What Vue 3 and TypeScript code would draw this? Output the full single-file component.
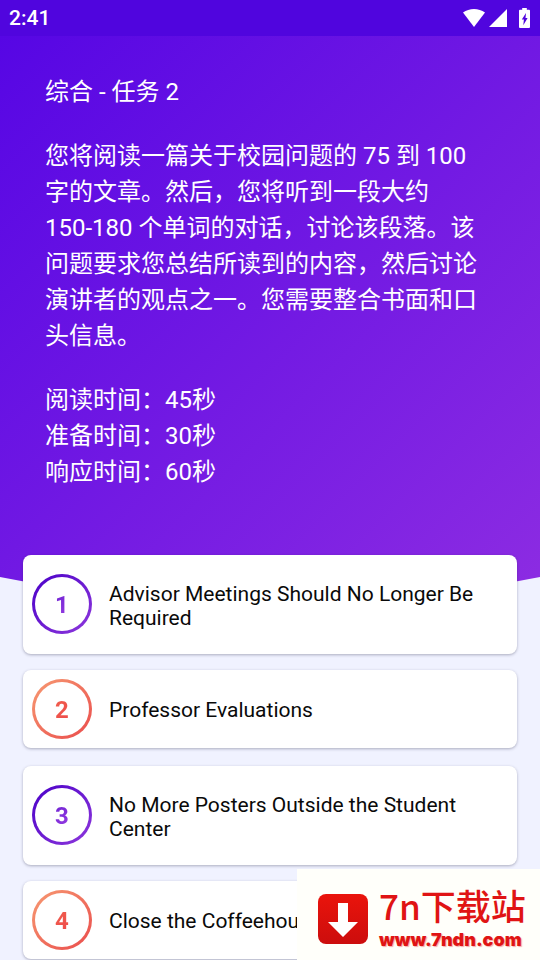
<script setup lang="ts">
interface Topic {
  id: number
  title: string
}

const intro: string =
  '您将阅读一篇关于校园问题的 75 到 100 字的文章。然后，您将听到一段大约 150-180 个单词的对话，讨论该段落。该问题要求您总结所读到的内容，然后讨论演讲者的观点之一。您需要整合书面和口头信息。'

const timings: string[] = ['阅读时间：45秒', '准备时间：30秒', '响应时间：60秒']

const topics: Topic[] = [
  { id: 1, title: 'Advisor Meetings Should No Longer Be Required' },
  { id: 2, title: 'Professor Evaluations' },
  { id: 3, title: 'No More Posters Outside the Student Center' },
  { id: 4, title: 'Close the Coffeehouse' },
]
</script>

<template>
  <div class="page">
    <div class="status">
      <span class="clock">2:41</span>
      <div class="indicators">
        <svg class="wifi" viewBox="0 0 22 18" aria-hidden="true">
          <path d="M0 3.6C3.2 1.2 7 0 11 0s7.800 1.200 11 3.600L11 18z" fill="#fff" />
        </svg>
        <svg class="signal" viewBox="0 0 18 18" aria-hidden="true">
          <path d="M18 0v18H0z" fill="#fff" />
        </svg>
        <svg class="battery" viewBox="0 0 11 20" aria-hidden="true">
          <path
            d="M3.200 0h4.600v1.800H10q1 0 1 1V19q0 1-1 1H1q-1 0-1-1V2.800q0-1 1-1h2.200zM7 5L2.800 11.600h2.100L4.300 17.200 8.600 10H6.500z"
            fill="#fff"
            fill-rule="evenodd"
          />
        </svg>
      </div>
    </div>

    <header class="hero">
      <h1>综合 - 任务 2</h1>
      <p>{{ intro }}</p>
      <ul class="timings">
        <li v-for="line in timings" :key="line">{{ line }}</li>
      </ul>
    </header>

    <main class="topics">
      <button
        v-for="topic in topics"
        :key="topic.id"
        type="button"
        class="card"
        :class="topic.id % 2 ? 'violet' : 'coral'"
      >
        <span class="ring"><span class="number">{{ topic.id }}</span></span>
        <span class="title">{{ topic.title }}</span>
      </button>
    </main>

    <aside class="stamp">
      <svg class="stamp-icon" viewBox="0 0 52 52" aria-hidden="true">
        <defs>
          <linearGradient id="stampFill" x1="0" y1="0" x2="0" y2="1">
            <stop offset="0" stop-color="#ea140c" />
            <stop offset="1" stop-color="#cc0d0d" />
          </linearGradient>
        </defs>
        <rect x="1" y="1" width="50" height="50" rx="8" fill="url(#stampFill)" />
        <path d="M21 10h10v19h10L26 44 11 29h10z" fill="#fff" />
      </svg>
      <div class="stamp-text">
        <span class="stamp-name">7n下载站</span>
        <span class="stamp-url">www.7ndn.com</span>
      </div>
    </aside>
  </div>
</template>

<style>
body {
  margin: 0;
  background: #f0f2ff;
}
</style>

<style scoped>
.page {
  position: relative;
  min-height: 100vh;
  overflow: hidden;
  font-family: Roboto, 'Noto Sans CJK SC', sans-serif;
  background: #f0f2ff;
}

.status {
  display: flex;
  align-items: center;
  justify-content: space-between;
  height: 36px;
  padding: 0 10px 0 9px;
  background: #5005de;
  color: #fff;
}

.clock {
  font-size: 21px;
  font-weight: 500;
  line-height: 36px;
}

.indicators {
  display: flex;
  align-items: center;
}

.wifi {
  width: 22px;
  height: 18px;
}

.signal {
  width: 18px;
  height: 18px;
  margin-left: 4px;
}

.battery {
  width: 11px;
  height: 20px;
  margin-left: 12px;
}

.hero {
  display: flex;
  flex-direction: column;
  gap: 28px;
  padding: 38px 60px 138px 45px;
  color: #fff;
  font-size: 24px;
  line-height: 36px;
  background: linear-gradient(135deg, #5606e4 0%, #8e2de2 100%);
  clip-path: polygon(0 0, 100% 0, 100% calc(100% - 51px), 50% 100%, 0 calc(100% - 51px));
}

.hero h1,
.hero p {
  margin: 0;
  font-size: 24px;
  font-weight: 400;
}

.timings {
  margin: 0;
  padding: 0;
  list-style: none;
}

.topics {
  position: relative;
  display: flex;
  flex-direction: column;
  margin-top: -73px;
  padding: 0 23px;
}

.card {
  display: flex;
  align-items: center;
  gap: 17px;
  margin: 0;
  padding: 0 24px 0 9px;
  border: 0;
  border-radius: 8px;
  background: #fff;
  box-shadow: 0 1px 3px rgba(40, 40, 70, 0.35);
  color: #0a0a0a;
  font-family: inherit;
  font-size: 21px;
  line-height: 24px;
  text-align: left;
  cursor: pointer;
}

.ring {
  display: flex;
  flex: none;
  align-items: center;
  justify-content: center;
  box-sizing: border-box;
  width: 60px;
  height: 60px;
  margin: 9px 0;
  border: 3px solid transparent;
  border-radius: 50%;
}

.number {
  padding: 2px 1px 0;
  font-size: 24px;
  font-weight: 700;
  background-clip: text;
  color: transparent;
}

.violet {
  margin-bottom: 16px;
}

.coral:not(:last-child) {
  margin-bottom: 18px;
}

.violet .ring {
  margin-bottom: 10px;
  background:
    linear-gradient(#fff, #fff) padding-box,
    linear-gradient(135deg, #4a00c8, #8e38dc) border-box;
}

.violet .number {
  background-image: linear-gradient(135deg, #6a1fd0, #9a3fe4);
}

.coral .ring {
  background:
    linear-gradient(#fff, #fff) padding-box,
    linear-gradient(135deg, #f79a72, #ea4c4c) border-box;
}

.coral .number {
  background-image: linear-gradient(135deg, #f0604e, #ee4a4a);
}

.title {
  padding: 26px 0 25px;
}

.violet .title {
  padding: 27px 0 24px;
}

.stamp {
  position: absolute;
  right: 0;
  bottom: 0;
  display: flex;
  align-items: center;
  gap: 10px;
  box-sizing: border-box;
  height: 91px;
  padding: 0 17px 0 20px;
  background: #fffffa;
  color: #e01414;
}

.stamp-icon {
  width: 52px;
  height: 52px;
  margin-top: 8px;
}

.stamp-text {
  display: flex;
  flex-direction: column;
  width: 144px;
}

.stamp-name {
  font-family: 'Noto Sans CJK SC', sans-serif;
  font-size: 35px;
  font-weight: 500;
  line-height: 50px;
  white-space: nowrap;
}

.stamp-url {
  font-family: Inter, sans-serif;
  font-size: 18px;
  font-weight: 900;
  line-height: 20px;
  text-shadow: 1px 1px 1px rgba(224, 20, 20, 0.35);
}
</style>
